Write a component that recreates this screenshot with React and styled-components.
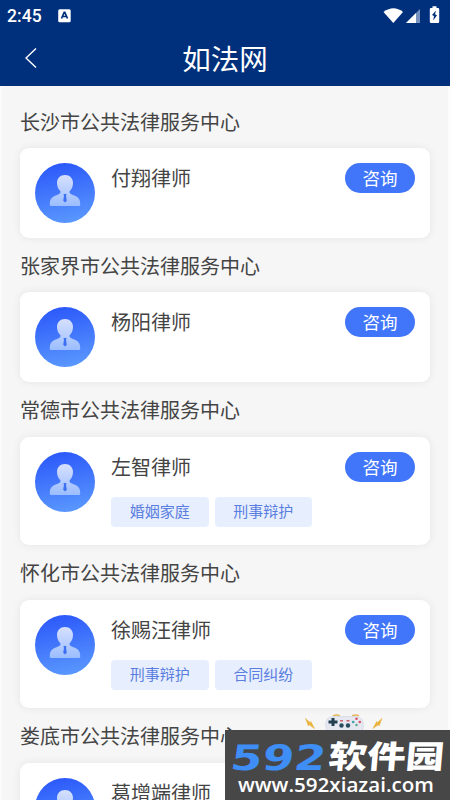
import styled, { createGlobalStyle } from 'styled-components'

const GlobalStyle = createGlobalStyle`
    * {
        box-sizing: border-box;
    }
    html, body {
        margin: 0;
        height: 100%;
        overflow: hidden;
    }
    body {
        font-family: 'Noto Sans CJK SC', sans-serif;
        color: #444;
    }
`;
const Screen = styled.div`
    position: relative;
    width: 450px;
    height: 800px;
    overflow: hidden;
    background: #f6f6f6;
    box-shadow: inset 2px 0 #fafafa, inset -2px 0 #fcfcfc;
`;
const Header = styled.header`
    height: 86px;
    background: #00307b;
    color: #fff;
`;
const StatusBar = styled.div`
    display: flex;
    justify-content: space-between;
    height: 32px;
    padding: 0 8px 0 7px;
`;
const StatusGroup = styled.div`
    display: flex;
    align-items: center;
    gap: ${props => props.$gap};
`;
const Clock = styled.span`
    font: 500 17.5px/32px Roboto, sans-serif;
    letter-spacing: 0.1px;
`;
const NavBar = styled.div`
    display: grid;
    grid-template-columns: 60px 1fr 60px;
    align-items: center;
    height: 54px;
    margin-top: -1px;
`;
const BackButton = styled.button`
    display: flex;
    padding: 0 0 0 25px;
    border: 0;
    background: none;
    color: #fff;
`;
const Title = styled.h1`
    margin: 0;
    font-size: 28.5px;
    font-weight: 400;
    line-height: 54px;
    text-align: center;
`;
const SectionTitle = styled.h2`
    height: 54.3px;
    margin: 0;
    padding-top: 13px;
    font-size: 20px;
    font-weight: 400;
    line-height: 30px;
`;
const List = styled.main`
    padding: 7.9px 20px 0;
`;
const Card = styled.article`
    display: flex;
    align-items: flex-start;
    gap: 16px;
    height: ${props => props.$tall ? '108.6px' : '90px'};
    padding: 15px;
    border-radius: 9px;
    background: #fff;
    box-shadow: 0 0 10px rgba(0, 0, 0, .07);
`;
const Info = styled.div`
    flex: 1;
`;
const Name = styled.div`
    height: 45px;
    font-size: 20px;
    line-height: 30px;
`;
const Tags = styled.div`
    display: flex;
    gap: 6px;
`;
const Tag = styled.span`
    width: 97.5px;
    height: 30px;
    border-radius: 4px;
    background: #e7eefe;
    color: #5a7ee0;
    font-size: 15px;
    line-height: 28px;
    text-align: center;
`;
const AskButton = styled.button`
    width: 70px;
    height: 30px;
    padding: 0;
    border: 0;
    border-radius: 15px;
    background: #4176fb;
    color: #fff;
    font-family: inherit;
    font-size: 17.5px;
    line-height: 28px;
`;
const AvatarSvg = styled.svg`
    flex: none;
    width: 60px;
    height: 60px;
`;
const Badge = styled.aside`
    position: absolute;
    right: 0;
    bottom: 0;
    width: 225px;
    height: 70px;
    background: #474747;
    color: #fff;
`;
const BadgeBrand = styled.div`
    display: flex;
    align-items: center;
    height: 41px;
    padding: 4px 0 0 6px;
`;
const BrandNumber = styled.span`
    width: 98px;
    color: #3e8ef5;
    font: 700 35px/40px 'DejaVu Sans', sans-serif;
    transform: translateY(5px) skewX(-8deg) scaleX(1.3);
    transform-origin: 0 50%;
`;
const BrandName = styled.span`
    font-size: 38.5px;
    font-weight: 900;
    line-height: 40px;
    white-space: nowrap;
    transform: translateY(1px) skewX(-5deg) scaleY(.82);
    transform-origin: 0 50%;
`;
const BadgeUrl = styled.div`
    padding-left: 13px;
    font: 600 20.6px/27px 'Open Sans', sans-serif;
    white-space: nowrap;
`;
const Gamepad = styled.svg`
    position: absolute;
    left: 78px;
    top: -16px;
    width: 82px;
    height: 16px;
`;

const sections = [
    { center: '长沙市公共法律服务中心', name: '付翔律师', tags: [] },
    { center: '张家界市公共法律服务中心', name: '杨阳律师', tags: [] },
    { center: '常德市公共法律服务中心', name: '左智律师', tags: ['婚姻家庭', '刑事辩护'] },
    { center: '怀化市公共法律服务中心', name: '徐赐汪律师', tags: ['刑事辩护', '合同纠纷'] },
    { center: '娄底市公共法律服务中心', name: '葛增端律师', tags: [] },
]

function Avatar({ id }) {
    return (
        <AvatarSvg viewBox="0 0 60 60">
            <defs>
                <linearGradient id={`bg${id}`} x1=".4" y1="0" x2=".6" y2="1">
                    <stop offset="0" stopColor="#2c59fa" />
                    <stop offset="1" stopColor="#5a98fe" />
                </linearGradient>
                <linearGradient id={`person${id}`} x1="0" y1="0" x2="0" y2="1">
                    <stop offset="0" stopColor="#d6e0ff" />
                    <stop offset="1" stopColor="#9bbdff" />
                </linearGradient>
            </defs>
            <circle cx="30" cy="30" r="30" fill={`url(#bg${id})`} />
            <path
                fill={`url(#person${id})`}
                d="M30 12c-4.800 0-8 3.300-8 8 0 3.700 1.500 6.500 3.500 8.500.2 2.200-1.500 2.800-4 3.700-4.200 1.500-6.700 3.800-6.700 8.300V42q0 1 1 1h28.400q1 0 1-1v-1.500c0-4.500-2.500-6.800-6.700-8.300-2.500-.9-4.200-1.500-4-3.700 2-2 3.500-4.800 3.500-8.500 0-4.700-3.200-8-8-8z"
            />
            <path fill="#3d70f4" d="M28.500 31h3l-.5 2 .8 4.800-1.800 1.700-1.800-1.700.8-4.800z" />
        </AvatarSvg>
    )
}

function StatusIcons() {
    return (
        <svg width="60" height="20" viewBox="0 0 60 20">
            <path fill="#fff" d="M1.500 6Q11.500-1.500 21 6L11.300 17z" />
            <path fill="#7691bd" d="M24 17 38 3v14z" />
            <path fill="#fff" d="M24 17 34 7v10z" />
            <path fill="#fff" d="M50.500 2v-1.700h4V2H56q1.200 0 1.200 1.200v12.600q0 1.200-1.200 1.200h-7q-1.200 0-1.200-1.200V3.200Q47.800 2 49 2z" />
            <path fill="#00307b" d="M54 4.500 50 9l2 1-.8 4.500L55 9.300l-2-1z" />
        </svg>
    )
}

function Watermark() {
    return (
        <Badge>
            <Gamepad viewBox="0 0 82 16">
                <path fill="#eab33d" stroke="#eab33d" strokeWidth=".6" d="m2.500 4.500 5 4.500.3-1.500 3.700 7-5.500-4-.5 1.500zM79 4.500l-5 4.500-.3-1.500-3.700 7 5.500-4 .5 1.500z" />
                <path fill="none" stroke="#e6b75a" strokeWidth="1.500" d="M30 2q4-2 7 0M49 2q4-2 7 0" />
                <path fill="#e5e8f0" stroke="#cbd2df" strokeWidth=".6" d="M31 2.500h21c8 0 10 6 7 15H24c-3-9-1-15 7-15z" />
                <path fill="#213f50" d="M28.500 4h3v2.500h3v3h-3V12h-3V9.500h-3v-3h3z" />
                <circle cx="38.500" cy="11.500" r="2.200" fill="#294b5f" />
                <circle cx="45" cy="11.500" r="2.200" fill="#294b5f" />
                <path fill="#cf6070" d="M37 6h3v1.500h-3zM43.500 6h3v1.500h-3z" />
                <circle cx="53.500" cy="4.700" r="1.300" fill="#d94f65" />
                <circle cx="53.500" cy="11" r="1.300" fill="#5bad8d" />
                <circle cx="50.200" cy="8" r="1.300" fill="#39a1a1" />
                <circle cx="56.800" cy="8" r="1.300" fill="#d94f65" />
            </Gamepad>
            <BadgeBrand>
                <BrandNumber>592</BrandNumber>
                <BrandName>软件园</BrandName>
            </BadgeBrand>
            <BadgeUrl>www.592xiazai.com</BadgeUrl>
        </Badge>
    )
}

export default function App() {
    return (
        <Screen>
            <GlobalStyle />
            <Header>
                <StatusBar>
                    <StatusGroup $gap="16px">
                        <Clock>2:45</Clock>
                        <svg width="13" height="14" viewBox="0 0 13 14">
                            <rect width="12.500" height="13" x=".2" y=".3" rx="1.500" fill="#fff" />
                            <path fill="none" stroke="#00307b" strokeWidth="1.700" d="m3.500 9.500 2.700-6.200h.6l2.700 6.200M4.500 7.500h4" />
                        </svg>
                    </StatusGroup>
                    <StatusGroup>
                        <StatusIcons />
                    </StatusGroup>
                </StatusBar>
                <NavBar>
                    <BackButton aria-label="返回">
                        <svg width="12" height="20" viewBox="0 0 12 20" fill="none" stroke="currentColor" strokeWidth="1.400">
                            <path d="M11 .500 1 10l10 9.500" />
                        </svg>
                    </BackButton>
                    <Title>如法网</Title>
                </NavBar>
            </Header>
            <List>
                {sections.map((item, index) => (
                    <section key={item.center}>
                        <SectionTitle>{item.center}</SectionTitle>
                        <Card $tall={item.tags.length > 0}>
                            <Avatar id={index} />
                            <Info>
                                <Name>{item.name}</Name>
                                <Tags>
                                    {item.tags.map(tag => <Tag key={tag}>{tag}</Tag>)}
                                </Tags>
                            </Info>
                            <AskButton>咨询</AskButton>
                        </Card>
                    </section>
                ))}
            </List>
            <Watermark />
        </Screen>
    )
}
